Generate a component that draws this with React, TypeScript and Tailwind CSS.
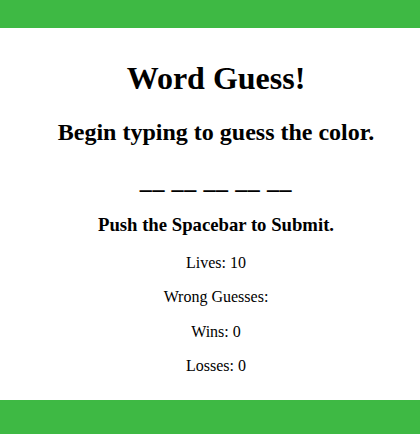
import { useState } from "react";

type gameType = {
  lives: number;
  wrong: string[];
  wins: number;
  losses: number;
};

export default function App() {
  const [word] = useState<string>("green");
  const [game] = useState<gameType>({
    lives: 10,
    wrong: [],
    wins: 0,
    losses: 0,
  });
  const blanks = word
    .split("")
    .map(() => "__")
    .join(" ");

  return (
    <div className="min-h-[434px] flex flex-col bg-white text-black font-['Liberation_Serif',serif] text-center">
      <div className="h-[28px] bg-[#3eb944]" />
      <div className="flex-1 flex flex-col items-center pl-[12px]">
        <h1 className="mt-[31.5px] text-[32px] leading-[1.15] font-bold">Word Guess!</h1>
        <h2 className="mt-[22.3px] text-[24px] leading-[1.15] font-bold">
          Begin typing to guess the color.
        </h2>
        <h2 className="mt-[21.5px] mb-[-1.6px] text-[24px] leading-[1.15] font-bold tracking-[0.6px]">
          {blanks}
        </h2>
        <h3 className="mt-[19.9px] text-[18.72px] leading-[1.15] font-bold">
          Push the Spacebar to Submit.
        </h3>
        <p className="mt-[18.7px] text-[16px] leading-[1.15]">Lives: {game.lives}</p>
        <p className="mt-[16px] text-[16px] leading-[1.15]">
          Wrong Guesses: {game.wrong.join(", ")}
        </p>
        <p className="mt-[16px] text-[16px] leading-[1.15]">Wins: {game.wins}</p>
        <p className="mt-[16px] text-[16px] leading-[1.15]">Losses: {game.losses}</p>
      </div>
      <div className="h-[34px] bg-[#3eb944]" />
    </div>
  );
}
